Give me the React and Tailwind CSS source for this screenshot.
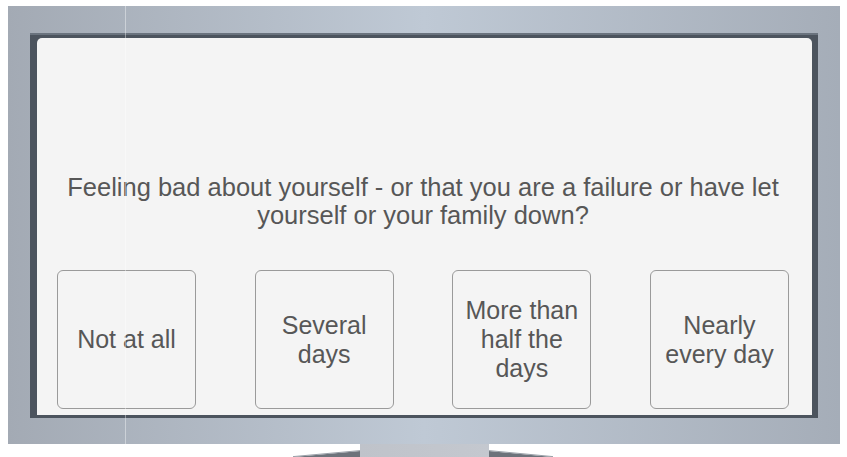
const options = [
  ['Not at all'],
  ['Several', 'days'],
  ['More than', 'half the', 'days'],
  ['Nearly', 'every day']
]

function Stand() {
  return (
    <svg width="847" height="13" viewBox="0 0 847 13" className="block">
      <defs>
        <linearGradient id="neck" x1="0" y1="0" x2="1" y2="0">
          <stop offset="0" stopColor="#bfc3ca" />
          <stop offset="1" stopColor="#c4c8cf" />
        </linearGradient>
      </defs>
      <path d="M293 13 L360 7 L360 13 Z" fill="#6d737b" />
      <path d="M293 12.6 L360 6.6" stroke="#9aa0a8" strokeWidth="1" />
      <path d="M489 7 L553 13 L489 13 Z" fill="#6d737b" />
      <path d="M489 6.6 L553 12.6" stroke="#9aa0a8" strokeWidth="1" />
      <rect x="360" y="0" width="129" height="13" fill="url(#neck)" />
    </svg>
  )
}

export default function App() {
  return (
    <div className="w-[847px] h-[457px] bg-white overflow-hidden pt-[6px]" style={{ fontFamily: '"Liberation Sans", Arial, sans-serif' }}>
      <div className="relative ml-[8px] w-[832px] h-[438px] pt-[27px] pl-[22px] bg-linear-to-r from-[#a3aab4] via-[#bfc9d5] to-[#a5adb8]">
        <div className="w-[788px] h-[385px] bg-[#4c545e] border-t-2 border-[#6a737e] pt-[3px] pl-[7px] pr-[6px] pb-[3px]">
          <div className="h-full bg-[#f4f4f4] rounded-t-[5px] flex flex-col justify-end pl-[20px] pr-[23px] pb-[6px]">
            <p className="mx-auto max-w-[740px] text-center text-[25.5px] leading-[28px] text-[#575757]">
              Feeling bad about yourself - or that you are a failure or have let yourself or your family down?
            </p>
            <div className="mt-[41px] flex justify-between">
              {options.map((lines, i) => (
                <button key={i} className="w-[139px] h-[139px] rounded-[6px] border-[1.5px] border-[#9a9a9a] bg-[#f4f4f4] flex flex-col items-center justify-center text-[25px] leading-[29px] text-[#575757]">
                  {lines.map(l => <span key={l}>{l}</span>)}
                </button>
              ))}
            </div>
          </div>
        </div>
        <div className="absolute left-[117px] top-0 w-px h-full bg-white/40" />
      </div>
      <Stand />
    </div>
  )
}
